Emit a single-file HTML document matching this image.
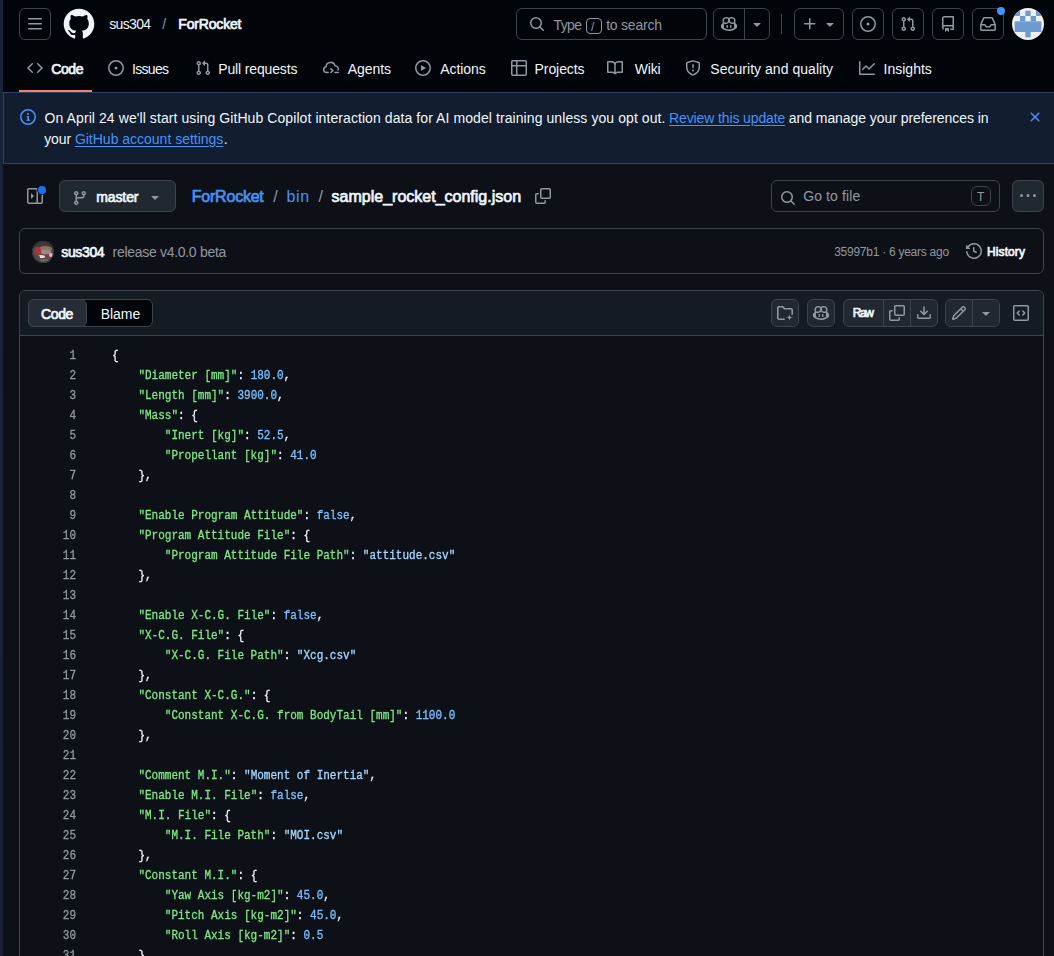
<!DOCTYPE html>
<html><head><meta charset="utf-8">
<style>
*{box-sizing:border-box;margin:0;padding:0}
html,body{width:1054px;height:956px;overflow:hidden;background:#0d1117;font-family:"Liberation Sans",sans-serif;color:#f0f6fc;font-size:14px}
.a{position:absolute}
svg{display:block;fill:currentColor}
.strip{left:0;top:0;width:3px;height:956px;background:linear-gradient(#17233a,#1a2234 50%,#1c2030)}
.hdr{left:3px;top:0;width:1051px;height:92px;background:#010409}
.btn{border:1px solid #3d444d;border-radius:6px}
.ic{color:#9198a1}
.t{white-space:nowrap;line-height:1}
.tab{font-size:14px;color:#f0f6fc}
.banner{left:3px;top:92px;width:1051px;height:72px;background:#121d2f;border:1px solid #2d4266;border-right:none}
.mono{font-family:"Liberation Mono",monospace}
.box{border:1px solid #3d444d;border-radius:6px}
.code{font-family:"Liberation Mono",monospace;font-size:12px;line-height:20px;white-space:pre;-webkit-text-stroke:0.3px currentColor;transform:scaleX(0.91667);transform-origin:0 0}.ln{transform-origin:100% 0}
.ln{color:#9198a1;text-align:right}
.k{color:#7ee787}.n{color:#79c0ff}.s{color:#a5d6ff}
</style></head><body>
<div class="a strip"></div>
<div class="a hdr"></div>


<!-- top header -->
<div class="a btn" style="left:19px;top:8px;width:32px;height:32px;color:#9198a1"><svg class="a" style="left:7px;top:7px" width="16" height="16" viewBox="0 0 16 16"><path d="M1 2.75A.75.75 0 0 1 1.75 2h12.5a.75.75 0 0 1 0 1.5H1.75A.75.75 0 0 1 1 2.75Zm0 5A.75.75 0 0 1 1.75 7h12.5a.75.75 0 0 1 0 1.5H1.75A.75.75 0 0 1 1 7.75ZM1.75 12h12.5a.75.75 0 0 1 0 1.5H1.75a.75.75 0 0 1 0-1.5Z"/></svg></div>
<svg class="a" style="left:63px;top:8px;color:#f0f6fc" width="32" height="32" viewBox="0.5 0.5 23 23"><path d="M12 1C5.923 1 1 5.923 1 12c0 4.867 3.149 8.979 7.521 10.436.55.096.756-.233.756-.522 0-.262-.013-1.128-.013-2.049-2.764.509-3.479-.674-3.699-1.292-.124-.317-.66-1.293-1.127-1.554-.385-.207-.936-.715-.014-.729.866-.014 1.485.797 1.691 1.128.99 1.663 2.571 1.196 3.204.907.096-.715.385-1.196.701-1.471-2.448-.275-5.005-1.224-5.005-5.432 0-1.196.426-2.186 1.128-2.956-.111-.275-.496-1.402.11-2.915 0 0 .921-.288 3.024 1.128a10.193 10.193 0 0 1 2.75-.371c.936 0 1.871.123 2.75.371 2.104-1.43 3.025-1.128 3.025-1.128.605 1.513.221 2.64.111 2.915.701.77 1.127 1.747 1.127 2.956 0 4.222-2.571 5.157-5.019 5.432.399.344.743 1.004.743 2.035 0 1.471-.014 2.654-.014 3.025 0 .289.206.632.756.522C19.851 20.979 23 16.854 23 12c0-6.077-4.922-11-11-11Z"/></svg>

<!-- search -->
<div class="a btn" style="left:516px;top:8px;width:191px;height:32px;"></div>
<svg class="a ic" style="left:529px;top:16px" width="16" height="16" viewBox="0 0 16 16"><path d="M10.68 11.74a6 6 0 0 1-7.922-8.982 6 6 0 0 1 8.982 7.922l3.04 3.04a.749.749 0 0 1-.326 1.275.749.749 0 0 1-.734-.215ZM11.5 7a4.499 4.499 0 1 0-8.997 0A4.499 4.499 0 0 0 11.5 7Z"/></svg>
<div class="a" style="left:586px;top:18px;width:16px;height:16px;border:1px solid #9198a1;border-radius:4px"></div>

<!-- copilot group -->
<div class="a btn" style="left:713px;top:8px;width:57px;height:32px;"></div>
<div class="a" style="left:744px;top:9px;width:1px;height:30px;background:#3d444d"></div>
<svg class="a ic" style="left:721px;top:16px" width="16" height="16" viewBox="0 0 16 16"><path d="M7.998 15.035c-4.562 0-7.873-2.914-7.998-3.749V9.338c.085-.628.677-1.686 1.588-2.065.013-.07.024-.143.036-.218.029-.183.06-.384.126-.612-.201-.508-.254-1.084-.254-1.656 0-.87.128-1.769.693-2.484.579-.733 1.494-1.124 2.724-1.261 1.206-.134 2.262.034 2.944.765.05.053.096.108.139.165.044-.057.094-.112.143-.165.682-.731 1.738-.899 2.944-.765 1.23.137 2.145.528 2.724 1.261.566.715.693 1.614.693 2.484 0 .572-.053 1.148-.254 1.656.066.228.098.429.126.612.012.076.024.148.037.218.924.385 1.522 1.471 1.591 2.095v1.872c0 .766-3.351 3.795-8.002 3.795Zm0-1.485c2.28 0 4.584-1.11 5.002-1.433V7.862l-.023-.116c-.49.21-1.075.291-1.727.291-1.146 0-2.059-.327-2.71-.991A3.222 3.222 0 0 1 8 6.303a3.24 3.240 0 0 1-.544.743c-.65.664-1.563.991-2.710.991-.652 0-1.236-.081-1.727-.291l-.023.116v4.255c.419.323 2.722 1.433 5.002 1.433ZM6.762 2.830c-.193-.206-.637-.413-1.682-.297-1.019.113-1.479.404-1.713.7-.247.312-.369.789-.369 1.554 0 .793.129 1.171.308 1.371.162.181.519.379 1.442.379.853 0 1.339-.235 1.638-.54.315-.322.527-.827.617-1.553.117-.935-.037-1.395-.241-1.614Zm4.155-.297c-1.044-.116-1.488.091-1.681.297-.204.219-.359.679-.242 1.614.091.726.303 1.231.618 1.553.299.305.784.54 1.638.54.922 0 1.28-.198 1.442-.379.179-.2.308-.578.308-1.371 0-.765-.123-1.242-.37-1.554-.233-.296-.693-.587-1.713-.7Z"/><path d="M6.25 9.037a.75.75 0 0 1 .75.75v1.501a.75.75 0 0 1-1.5 0V9.787a.75.75 0 0 1 .75-.75Zm4.25.75v1.501a.75.75 0 0 1-1.5 0V9.787a.75.75 0 0 1 1.5 0Z"/></svg>
<svg class="a ic" style="left:749px;top:16px" width="16" height="16" viewBox="0 0 16 16"><path d="m4.427 7.427 3.396 3.396a.25.25 0 0 0 .354 0l3.396-3.396A.25.25 0 0 0 11.396 7H4.604a.25.25 0 0 0-.177.427Z"/></svg>
<div class="a" style="left:781px;top:14px;width:1px;height:20px;background:#3d444d"></div>

<!-- plus -->
<div class="a btn" style="left:794px;top:8px;width:50px;height:32px;"></div>
<svg class="a ic" style="left:802px;top:16px" width="16" height="16" viewBox="0 0 16 16"><path d="M7.75 2a.75.75 0 0 1 .75.75V7h4.25a.75.75 0 0 1 0 1.5H8.5v4.25a.75.75 0 0 1-1.5 0V8.5H2.75a.75.75 0 0 1 0-1.5H7V2.75A.75.75 0 0 1 7.75 2Z"/></svg>
<svg class="a ic" style="left:822px;top:16px" width="16" height="16" viewBox="0 0 16 16"><path d="m4.427 7.427 3.396 3.396a.25.25 0 0 0 .354 0l3.396-3.396A.25.25 0 0 0 11.396 7H4.604a.25.25 0 0 0-.177.427Z"/></svg>

<div class="a btn" style="left:852px;top:8px;width:32px;height:32px;"></div>
<svg class="a ic" style="left:860px;top:16px" width="16" height="16" viewBox="0 0 16 16"><path d="M8 9.5a1.5 1.5 0 1 0 0-3 1.5 1.5 0 0 0 0 3Z"/><path d="M8 0a8 8 0 1 1 0 16A8 8 0 0 1 8 0ZM1.5 8a6.5 6.5 0 1 0 13 0 6.5 6.5 0 0 0-13 0Z"/></svg>
<div class="a btn" style="left:892px;top:8px;width:32px;height:32px;"></div>
<svg class="a ic" style="left:900px;top:16px" width="16" height="16" viewBox="0 0 16 16"><path d="M1.5 3.25a2.25 2.25 0 1 1 3 2.122v5.256a2.251 2.251 0 1 1-1.5 0V5.372A2.25 2.25 0 0 1 1.5 3.25Zm5.677-.177L9.573.677A.25.25 0 0 1 10 .854V2.5h1A2.5 2.5 0 0 1 13.5 5v5.628a2.251 2.251 0 1 1-1.5 0V5a1 1 0 0 0-1-1h-1v1.646a.25.25 0 0 1-.427.177L7.177 3.427a.25.25 0 0 1 0-.354ZM3.75 2.5a.75.75 0 1 0 0 1.5.75.75 0 0 0 0-1.5Zm0 9.5a.75.75 0 1 0 0 1.5.75.75 0 0 0 0-1.5Zm8.25.75a.75.75 0 1 0 1.5 0 .75.75 0 0 0-1.5 0Z"/></svg>
<div class="a btn" style="left:932px;top:8px;width:32px;height:32px;"></div>
<svg class="a ic" style="left:940px;top:16px" width="16" height="16" viewBox="0 0 16 16"><path d="M2 2.5A2.5 2.5 0 0 1 4.5 0h8.75a.75.75 0 0 1 .75.75v12.5a.75.75 0 0 1-.75.75h-2.5a.75.75 0 0 1 0-1.5h1.75v-2h-8a1 1 0 0 0-.714 1.7.75.75 0 1 1-1.072 1.05A2.495 2.495 0 0 1 2 11.5Zm10.5-1h-8a1 1 0 0 0-1 1v6.708A2.486 2.486 0 0 1 4.5 9h8ZM5 12.25a.25.25 0 0 1 .25-.25h3.5a.25.25 0 0 1 .25.25v3.250a.25.25 0 0 1-.4.2l-1.45-1.087a.249.249 0 0 0-.3 0L5.4 15.7a.25.25 0 0 1-.4-.2Z"/></svg>
<div class="a btn" style="left:972px;top:8px;width:32px;height:32px;"></div>
<svg class="a ic" style="left:980px;top:16px" width="16" height="16" viewBox="0 0 16 16"><path d="M2.8 2.06A1.75 1.75 0 0 1 4.41 1h7.18c.7 0 1.333.417 1.61 1.06l2.74 6.395c.04.093.06.194.06.295v4.5A1.75 1.75 0 0 1 14.25 15H1.75A1.75 1.75 0 0 1 0 13.25v-4.5c0-.101.02-.202.06-.295Zm1.61.44a.25.25 0 0 0-.23.152L1.887 8H4.75a.75.75 0 0 1 .6.3L6.625 10h2.75l1.275-1.7a.75.75 0 0 1 .6-.3h2.863L11.820 2.652a.25.25 0 0 0-.23-.152Zm10.09 7h-2.875l-1.275 1.7a.75.75 0 0 1-.6.3h-3.5a.75.75 0 0 1-.6-.3L4.375 9.5H1.5v3.75c0 .138.112.25.25.25h12.5a.25.25 0 0 0 .25-.25Z"/></svg>
<div class="a" style="left:997px;top:7px;width:8px;height:8px;border-radius:50%;background:#4493f8"></div>
<svg class="a" style="left:1012px;top:8px" width="32" height="32" viewBox="0 0 32 32"><defs><clipPath id="av"><circle cx="16" cy="16" r="16"/></clipPath></defs><g clip-path="url(#av)"><rect width="32" height="32" fill="#f0f0f0"/><g fill="#6b9bd1"><rect x="2.67" y="2.67" width="5.33" height="5.33"/><rect x="13.33" y="2.67" width="5.33" height="5.33"/><rect x="24" y="2.67" width="5.33" height="5.33"/><rect x="8" y="8" width="5.33" height="5.33"/><rect x="18.67" y="8" width="5.33" height="5.33"/><rect x="2.67" y="13.33" width="26.67" height="10.67"/><rect x="13.33" y="24" width="5.33" height="5.33"/></g></g></svg>

<!-- nav tabs -->
<svg class="a ic" style="left:27px;top:60px" width="16" height="16" viewBox="0 0 16 16"><path d="M4.72 3.22a.75.75 0 0 1 1.06 1.06L2.06 8l3.72 3.72a.75.75 0 1 1-1.06 1.06L.47 8.53a.75.75 0 0 1 0-1.06Zm6.56 0a.75.75 0 1 0-1.06 1.06L13.94 8l-3.72 3.72a.75.75 0 1 0 1.06 1.06l4.25-4.25a.75.75 0 0 0 0-1.06Z"/></svg>
<div class="a" style="left:19px;top:90px;width:73px;height:2px;background:#f78166"></div>
<svg class="a ic" style="left:108px;top:60px" width="16" height="16" viewBox="0 0 16 16"><path d="M8 9.5a1.5 1.5 0 1 0 0-3 1.5 1.5 0 0 0 0 3Z"/><path d="M8 0a8 8 0 1 1 0 16A8 8 0 0 1 8 0ZM1.5 8a6.5 6.5 0 1 0 13 0 6.5 6.5 0 0 0-13 0Z"/></svg>
<svg class="a ic" style="left:195px;top:60px" width="16" height="16" viewBox="0 0 16 16"><path d="M1.5 3.25a2.25 2.25 0 1 1 3 2.122v5.256a2.251 2.251 0 1 1-1.5 0V5.372A2.25 2.25 0 0 1 1.5 3.25Zm5.677-.177L9.573.677A.25.25 0 0 1 10 .854V2.5h1A2.5 2.5 0 0 1 13.5 5v5.628a2.251 2.251 0 1 1-1.5 0V5a1 1 0 0 0-1-1h-1v1.646a.25.25 0 0 1-.427.177L7.177 3.427a.25.25 0 0 1 0-.354ZM3.75 2.5a.75.75 0 1 0 0 1.5.75.75 0 0 0 0-1.5Zm0 9.5a.75.75 0 1 0 0 1.5.75.75 0 0 0 0-1.5Zm8.25.75a.75.75 0 1 0 1.5 0 .75.75 0 0 0-1.5 0Z"/></svg>
<svg class="a ic" style="left:323px;top:59px;fill:none" width="16" height="16" viewBox="0 0 16 16" stroke="currentColor" stroke-width="1.5" stroke-linecap="round" stroke-linejoin="round"><path d="M5.2 13.5H3.6A2.9 2.9 0 0 1 3.10 7.74A4.5 4.5 0 0 1 11.95 6.75A3.15 3.15 0 0 1 15.12 10.80"/><path d="M7.9 9.85L9.9 11.65L7.9 13.45M12 13.5H15.2"/></svg>
<svg class="a ic" style="left:415px;top:60px" width="16" height="16" viewBox="0 0 16 16"><path d="M8 0a8 8 0 1 1 0 16A8 8 0 0 1 8 0ZM1.5 8a6.5 6.5 0 1 0 13 0 6.5 6.5 0 0 0-13 0Zm4.879-2.773 4.264 2.559a.25.25 0 0 1 0 .428l-4.264 2.559A.25.25 0 0 1 6 10.559V5.442a.25.25 0 0 1 .379-.215Z"/></svg>
<svg class="a ic" style="left:511px;top:60px" width="16" height="16" viewBox="0 0 16 16"><path d="M0 1.75C0 .784.784 0 1.75 0h12.5C15.216 0 16 .784 16 1.75v12.5A1.75 1.75 0 0 1 14.25 16H1.75A1.75 1.75 0 0 1 0 14.25ZM6.5 6.5v8h7.75a.25.25 0 0 0 .25-.25V6.5Zm8-1.5V1.75a.25.25 0 0 0-.25-.25H6.5V5Zm-13 1.5v7.75c0 .138.112.25.25.25H5v-8ZM5 5V1.5H1.75a.25.25 0 0 0-.25.25V5Z"/></svg>
<svg class="a ic" style="left:607px;top:60px" width="16" height="16" viewBox="0 0 16 16"><path d="M0 1.75A.75.75 0 0 1 .75 1h4.253c1.227 0 2.317.59 3 1.501A3.743 3.743 0 0 1 11.006 1h4.245a.75.75 0 0 1 .75.75v10.5a.75.75 0 0 1-.75.75h-4.507a2.25 2.25 0 0 0-1.591.659l-.622.621a.75.75 0 0 1-1.06 0l-.622-.621A2.25 2.25 0 0 0 5.258 13H.75a.75.75 0 0 1-.75-.75Zm7.251 10.324.004-5.073-.002-2.253A2.25 2.25 0 0 0 5.003 2.5H1.5v9h3.757a3.75 3.75 0 0 1 1.994.574ZM8.755 4.75l-.004 7.322a3.752 3.752 0 0 1 1.992-.572H14.5v-9h-3.495a2.25 2.25 0 0 0-2.250 2.25Z"/></svg>
<svg class="a ic" style="left:685px;top:60px" width="16" height="16" viewBox="0 0 16 16"><path d="M7.467.133a1.748 1.748 0 0 1 1.066 0l5.25 1.68A1.75 1.75 0 0 1 15 3.48V7c0 1.566-.32 3.182-1.303 4.682-.983 1.498-2.585 2.813-5.032 3.855a1.697 1.697 0 0 1-1.33 0c-2.447-1.042-4.049-2.357-5.032-3.855C1.32 10.182 1 8.566 1 7V3.48a1.755 1.755 0 0 1 1.217-1.667Zm.61 1.429a.25.25 0 0 0-.153 0l-5.25 1.68a.25.25 0 0 0-.174.238V7c0 1.358.275 2.666 1.057 3.860.784 1.194 2.121 2.34 4.366 3.297a.196.196 0 0 0 .154 0c2.245-.956 3.582-2.104 4.366-3.298C13.225 9.666 13.5 8.36 13.5 7V3.48a.251.251 0 0 0-.174-.237l-5.25-1.68ZM8.75 4.75v3a.75.75 0 0 1-1.5 0v-3a.75.75 0 0 1 1.5 0ZM9 10.5a1 1 0 1 1-2 0 1 1 0 0 1 2 0Z"/></svg>
<svg class="a ic" style="left:859px;top:60px" width="16" height="16" viewBox="0 0 16 16"><path d="M1.5 1.75V13.5h13.75a.75.75 0 0 1 0 1.5H.75a.75.75 0 0 1-.75-.75V1.75a.75.75 0 0 1 1.5 0Zm14.28 2.53-5.25 5.25a.75.75 0 0 1-1.06 0L7 7.06 4.28 9.78a.751.751 0 0 1-1.042-.018.751.751 0 0 1-.018-1.042l3.25-3.25a.75.75 0 0 1 1.06 0L10 7.94l4.72-4.72a.751.751 0 0 1 1.042.018.751.751 0 0 1 .018 1.042Z"/></svg>

<!-- banner -->
<div class="a banner"></div>
<svg class="a" style="left:20px;top:109px;color:#4493f8" width="16" height="16" viewBox="0 0 16 16"><path d="M0 8a8 8 0 1 1 16 0A8 8 0 0 1 0 8Zm8-6.5a6.5 6.5 0 1 0 0 13 6.5 6.5 0 0 0 0-13ZM6.5 7.75A.75.75 0 0 1 7.25 7h1a.75.75 0 0 1 .75.75v2.75h.25a.75.75 0 0 1 0 1.5h-2a.75.75 0 0 1 0-1.5h.25v-2h-.25a.75.75 0 0 1-.75-.75ZM8 6a1 1 0 1 1 0-2 1 1 0 0 1 0 2Z"/></svg>
<svg class="a" style="left:1027px;top:109px;color:#4493f8" width="16" height="16" viewBox="0 0 16 16"><path d="M3.72 3.72a.75.75 0 0 1 1.06 0L8 6.94l3.22-3.22a.749.749 0 0 1 1.275.326.749.749 0 0 1-.215.734L9.06 8l3.220 3.22a.749.749 0 0 1-.326 1.275.749.749 0 0 1-.734-.215L8 9.06l-3.22 3.22a.751.751 0 0 1-1.042-.018.751.751 0 0 1-.018-1.042L6.94 8 3.72 4.78a.75.75 0 0 1 0-1.060Z"/></svg>

<!-- repo bar -->
<svg class="a ic" style="left:27px;top:188px" width="16" height="16" viewBox="0 0 16 16"><path d="M6.823 7.823a.25.25 0 0 1 0 .354l-2.396 2.396A.25.25 0 0 1 4 10.396V5.604a.25.25 0 0 1 .427-.177Z"/><path d="M1.75 0h12.5C15.216 0 16 .784 16 1.75v12.5A1.75 1.75 0 0 1 14.25 16H1.75A1.75 1.75 0 0 1 0 14.250V1.75C0 .784.784 0 1.75 0ZM1.5 1.75v12.5c0 .138.112.25.25.25H9.5v-13H1.75a.25.25 0 0 0-.25.25ZM11 14.5h3.25a.25.25 0 0 0 .25-.25V1.75a.25.25 0 0 0-.25-.25H11Z"/></svg>
<div class="a" style="left:37px;top:185px;width:10px;height:10px;border-radius:50%;background:#0d1117"></div>
<div class="a" style="left:38px;top:186px;width:8px;height:8px;border-radius:50%;background:#1f6feb"></div>

<div class="a btn" style="left:59px;top:180px;width:117px;height:32px;background:#212830"></div>
<svg class="a ic" style="left:72px;top:190px" width="16" height="16" viewBox="0 0 16 16"><path d="M9.5 3.25a2.25 2.25 0 1 1 3 2.122V6A2.5 2.5 0 0 1 10 8.5H6a1 1 0 0 0-1 1v1.128a2.251 2.251 0 1 1-1.5 0V5.372a2.25 2.25 0 1 1 1.5 0v1.836A2.493 2.493 0 0 1 6 7h4a1 1 0 0 0 1-1v-.628A2.25 2.25 0 0 1 9.5 3.25Zm-6 0a.75.75 0 1 0 1.5 0 .75.75 0 0 0-1.5 0Zm8.25-.75a.75.75 0 1 0 0 1.5.75.75 0 0 0 0-1.5ZM4.25 12a.75.75 0 1 0 0 1.5.75.75 0 0 0 0-1.5Z"/></svg>
<svg class="a ic" style="left:147px;top:189px" width="16" height="16" viewBox="0 0 16 16"><path d="m4.427 7.427 3.396 3.396a.25.25 0 0 0 .354 0l3.396-3.396A.25.25 0 0 0 11.396 7H4.604a.25.25 0 0 0-.177.427Z"/></svg>

<svg class="a ic" style="left:535px;top:188px" width="16" height="16" viewBox="0 0 16 16"><path d="M0 6.75C0 5.784.784 5 1.75 5h1.5a.75.75 0 0 1 0 1.5h-1.5a.25.25 0 0 0-.25.25v7.5c0 .138.112.25.25.25h7.5a.25.25 0 0 0 .25-.25v-1.5a.75.75 0 0 1 1.5 0v1.5A1.75 1.75 0 0 1 9.25 16h-7.5A1.75 1.75 0 0 1 0 14.25Z"/><path d="M5 1.75C5 .784 5.784 0 6.75 0h7.5C15.216 0 16 .784 16 1.75v7.5A1.75 1.75 0 0 1 14.25 11h-7.5A1.75 1.75 0 0 1 5 9.25Zm1.75-.25a.25.25 0 0 0-.25.25v7.5c0 .138.112.25.25.25h7.5a.25.25 0 0 0 .25-.25v-7.5a.25.25 0 0 0-.25-.25Z"/></svg>

<div class="a btn" style="left:771px;top:180px;width:229px;height:32px;background:#0d1117"></div>
<svg class="a ic" style="left:780px;top:190px" width="16" height="16" viewBox="0 0 16 16"><path d="M10.68 11.74a6 6 0 0 1-7.922-8.982 6 6 0 0 1 8.982 7.922l3.04 3.04a.749.749 0 0 1-.326 1.275.749.749 0 0 1-.734-.215ZM11.5 7a4.499 4.499 0 1 0-8.997 0A4.499 4.499 0 0 0 11.5 7Z"/></svg>
<div class="a" style="left:971px;top:186px;width:20px;height:20px;border:1px solid #3d444d;border-radius:6px"></div>

<div class="a btn" style="left:1012px;top:180px;width:32px;height:32px;background:#212830"></div>
<svg class="a ic" style="left:1020px;top:188px" width="16" height="16" viewBox="0 0 16 16"><path d="M8 9a1.5 1.5 0 1 0 0-3 1.5 1.5 0 0 0 0 3ZM1.5 9a1.5 1.5 0 1 0 0-3 1.5 1.5 0 0 0 0 3Zm13 0a1.5 1.5 0 1 0 0-3 1.5 1.5 0 0 0 0 3Z"/></svg>

<!-- commit box -->
<div class="a box" style="left:19px;top:228px;width:1025px;height:46px"></div>
<svg class="a" style="left:32px;top:241px" width="22" height="22" viewBox="0 0 22 22"><defs><clipPath id="ca"><circle cx="11" cy="11" r="11"/></clipPath><filter id="fb" x="-20%" y="-20%" width="140%" height="140%"><feGaussianBlur stdDeviation="0.6"/></filter></defs><g clip-path="url(#ca)"><rect width="22" height="22" fill="#5a4e4a"/><g filter="url(#fb)"><rect x="0" y="0" width="22" height="6" fill="#4a3430"/><ellipse cx="13" cy="8" rx="7" ry="3" fill="#8a726a"/><ellipse cx="6" cy="10" rx="3" ry="4" fill="#b0303c"/><ellipse cx="14" cy="11" rx="5" ry="2.5" fill="#9a8a82"/><ellipse cx="9" cy="15.5" rx="4" ry="1.6" fill="#e8e4e4"/><ellipse cx="16" cy="15" rx="3" ry="2" fill="#8a3a50"/><ellipse cx="19" cy="14" rx="2" ry="2" fill="#e0b8d0"/><ellipse cx="5" cy="17" rx="3" ry="3" fill="#504a56"/><ellipse cx="13" cy="20" rx="5" ry="2" fill="#7a6458"/></g></g><circle cx="11" cy="11" r="10.5" fill="none" stroke="#2a2f38" stroke-width="1"/></svg>
<svg class="a ic" style="left:966px;top:243px" width="16" height="16" viewBox="0 0 16 16"><path d="m.427 1.927 1.215 1.215a8.002 8.002 0 1 1-1.6 5.685.75.75 0 1 1 1.493-.154 6.5 6.5 0 1 0 1.18-4.458l1.358 1.358A.25.25 0 0 1 3.896 6H.25A.25.25 0 0 1 0 5.75V2.104a.25.25 0 0 1 .427-.177ZM7.75 4a.75.75 0 0 1 .75.75v2.992l2.028.812a.75.75 0 0 1-.557 1.392l-2.5-1A.751.751 0 0 1 7 8.25v-3.5A.75.75 0 0 1 7.75 4Z"/></svg>

<!-- file box -->
<div class="a" style="left:19px;top:290px;width:1025px;height:700px;border:1px solid #3d444d;border-radius:6px;background:#0d1117"></div>
<div class="a" style="left:20px;top:291px;width:1023px;height:44px;background:#151b23;border-radius:5px 5px 0 0"></div>
<div class="a" style="left:20px;top:335px;width:1023px;height:1px;background:#3d444d"></div>

<div class="a" style="left:28px;top:299px;width:125px;height:28px;border:1px solid #3d444d;border-radius:6px;background:#010409"></div>
<div class="a" style="left:28px;top:299px;width:59px;height:28px;border:1px solid #3d444d;border-radius:6px;background:#262c36"></div>

<div class="a btn" style="left:771px;top:299px;width:28px;height:28px;background:#212830"></div>
<svg class="a ic" style="left:777px;top:305px;fill:none" width="16" height="16" viewBox="0 0 16 16" stroke="currentColor" stroke-width="1.6" stroke-linejoin="round" stroke-linecap="butt"><path d="M7.75 14.3H2A1.25 1.25 0 0 1 0.8 13.05V2.9A1.25 1.25 0 0 1 2 1.7H5.9L7.4 3.7H14A1.25 1.25 0 0 1 15.2 4.95V9.8"/><path d="M12.5 9C12.9 11.7 13.3 12.1 16 12.5C13.3 12.9 12.9 13.3 12.5 16C12.1 13.3 11.7 12.9 9 12.5C11.7 12.1 12.1 11.7 12.5 9Z" fill="currentColor" stroke="none"/></svg>
<div class="a btn" style="left:807px;top:299px;width:28px;height:28px;background:#212830"></div>
<svg class="a ic" style="left:813px;top:305px" width="16" height="16" viewBox="0 0 16 16"><path d="M7.998 15.035c-4.562 0-7.873-2.914-7.998-3.749V9.338c.085-.628.677-1.686 1.588-2.065.013-.07.024-.143.036-.218.029-.183.06-.384.126-.612-.201-.508-.254-1.084-.254-1.656 0-.87.128-1.769.693-2.484.579-.733 1.494-1.124 2.724-1.261 1.206-.134 2.262.034 2.944.765.05.053.096.108.139.165.044-.057.094-.112.143-.165.682-.731 1.738-.899 2.944-.765 1.23.137 2.145.528 2.724 1.261.566.715.693 1.614.693 2.484 0 .572-.053 1.148-.254 1.656.066.228.098.429.126.612.012.076.024.148.037.218.924.385 1.522 1.471 1.591 2.095v1.872c0 .766-3.351 3.795-8.002 3.795Zm0-1.485c2.28 0 4.584-1.11 5.002-1.433V7.862l-.023-.116c-.49.21-1.075.291-1.727.291-1.146 0-2.059-.327-2.71-.991A3.222 3.222 0 0 1 8 6.303a3.24 3.24 0 0 1-.544.743c-.65.664-1.563.991-2.71.991-.652 0-1.236-.081-1.727-.291l-.023.116v4.255c.419.323 2.722 1.433 5.002 1.433ZM6.762 2.83c-.193-.206-.637-.413-1.682-.297-1.019.113-1.479.404-1.713.7-.247.312-.369.789-.369 1.554 0 .793.129 1.171.308 1.371.162.181.519.379 1.442.379.853 0 1.339-.235 1.638-.54.315-.322.527-.827.617-1.553.117-.935-.037-1.395-.241-1.614Zm4.155-.297c-1.044-.116-1.488.091-1.681.297-.204.219-.359.679-.242 1.614.091.726.303 1.231.618 1.553.299.305.784.54 1.638.54.922 0 1.28-.198 1.442-.379.179-.2.308-.578.308-1.371 0-.765-.123-1.242-.37-1.554-.233-.296-.693-.587-1.713-.7Z"/><path d="M6.25 9.037a.75.75 0 0 1 .75.75v1.501a.75.75 0 0 1-1.5 0V9.787a.75.75 0 0 1 .75-.75Zm4.25.75v1.501a.75.75 0 0 1-1.5 0V9.787a.75.75 0 0 1 1.5 0Z"/></svg>

<div class="a btn" style="left:843px;top:299px;width:95px;height:28px;background:#212830"></div>
<div class="a" style="left:883px;top:300px;width:1px;height:26px;background:#3d444d"></div>
<div class="a" style="left:910px;top:300px;width:1px;height:26px;background:#3d444d"></div>
<svg class="a ic" style="left:889px;top:305px" width="16" height="16" viewBox="0 0 16 16"><path d="M0 6.75C0 5.784.784 5 1.75 5h1.5a.75.75 0 0 1 0 1.5h-1.5a.25.25 0 0 0-.25.25v7.5c0 .138.112.25.25.25h7.5a.25.25 0 0 0 .25-.25v-1.5a.75.75 0 0 1 1.5 0v1.5A1.75 1.75 0 0 1 9.25 16h-7.5A1.75 1.75 0 0 1 0 14.25Z"/><path d="M5 1.75C5 .784 5.784 0 6.75 0h7.5C15.216 0 16 .784 16 1.75v7.5A1.75 1.75 0 0 1 14.25 11h-7.5A1.75 1.75 0 0 1 5 9.25Zm1.75-.25a.25.25 0 0 0-.25.25v7.5c0 .138.112.25.25.25h7.5a.25.25 0 0 0 .25-.25v-7.5a.25.25 0 0 0-.25-.25Z"/></svg>
<svg class="a ic" style="left:916px;top:305px" width="16" height="16" viewBox="0 0 16 16"><path d="M2.75 14A1.75 1.75 0 0 1 1 12.25v-2.5a.75.75 0 0 1 1.5 0v2.5c0 .138.112.25.25.25h10.5a.25.25 0 0 0 .25-.25v-2.5a.75.75 0 0 1 1.5 0v2.5A1.75 1.75 0 0 1 13.25 14Z"/><path d="M7.25 7.689V2a.75.75 0 0 1 1.5 0v5.689l1.97-1.969a.749.749 0 1 1 1.06 1.06l-3.25 3.25a.749.749 0 0 1-1.06 0L4.22 6.78a.749.749 0 1 1 1.06-1.06l1.97 1.969Z"/></svg>

<div class="a btn" style="left:945px;top:299px;width:55px;height:28px;background:#212830"></div>
<div class="a" style="left:972px;top:300px;width:1px;height:26px;background:#3d444d"></div>
<svg class="a ic" style="left:951px;top:305px" width="16" height="16" viewBox="0 0 16 16"><path d="M11.013 1.427a1.75 1.75 0 0 1 2.474 0l1.086 1.086a1.75 1.75 0 0 1 0 2.474l-8.61 8.61c-.21.21-.47.364-.756.445l-3.251.93a.75.75 0 0 1-.927-.928l.929-3.25c.081-.286.235-.547.445-.758l8.61-8.61Zm.176 4.823L9.75 4.81l-6.286 6.287a.253.253 0 0 0-.064.108l-.558 1.953 1.953-.558a.253.253 0 0 0 .108-.064Zm1.238-3.763a.25.25 0 0 0-.354 0L10.811 3.75l1.439 1.44 1.263-1.263a.25.25 0 0 0 0-.354Z"/></svg>
<svg class="a ic" style="left:978px;top:305px" width="16" height="16" viewBox="0 0 16 16"><path d="m4.427 7.427 3.396 3.396a.25.25 0 0 0 .354 0l3.396-3.396A.25.25 0 0 0 11.396 7H4.604a.25.25 0 0 0-.177.427Z"/></svg>

<svg class="a ic" style="left:1013px;top:305px" width="16" height="16" viewBox="0 0 16 16"><path d="M0 1.75C0 .784.784 0 1.75 0h12.5C15.216 0 16 .784 16 1.75v12.5A1.75 1.75 0 0 1 14.25 16H1.75A1.75 1.75 0 0 1 0 14.25Zm1.75-.25a.25.25 0 0 0-.25.25v12.5c0 .138.112.25.25.25h12.5a.25.25 0 0 0 .25-.25V1.75a.25.25 0 0 0-.25-.25Zm7.47 3.97a.75.75 0 0 1 1.06 0l2 2a.75.75 0 0 1 0 1.06l-2 2a.749.749 0 0 1-1.275-.326.749.749 0 0 1 .215-.734L10.69 8 9.22 6.53a.75.75 0 0 1 0-1.06ZM6.78 6.53 5.31 8l1.47 1.47a.749.749 0 0 1-.326 1.275.749.749 0 0 1-.734-.215l-2-2a.75.75 0 0 1 0-1.06l2-2a.751.751 0 0 1 1.042.018.751.751 0 0 1 .018 1.042Z"/></svg>

<div class="a t" style="left:591px;top:21px;font-size:12px;color:#9198a1">/</div>
<div class="a t" style="left:977px;top:191px;font-size:12px;color:#9198a1">T</div>
<div id="h_user" class="a t" style="left:109.25px;top:17px;font-size:14px;color:#f0f6fc;letter-spacing:-0.670px">sus304</div>
<div id="h_slash" class="a t" style="left:162.20px;top:17px;font-size:14px;color:#9198a1;letter-spacing:0.000px">/</div>
<div id="h_repo" class="a t" style="left:178.30px;top:17px;font-size:14px;color:#f0f6fc;letter-spacing:-0.175px;-webkit-text-stroke:0.7px currentColor">ForRocket</div>
<div id="s_type" class="a t" style="left:553.60px;top:18px;font-size:14px;color:#9198a1;letter-spacing:-0.633px">Type</div>
<div id="s_tos" class="a t" style="left:606.20px;top:18px;font-size:14px;color:#9198a1;letter-spacing:-0.225px">to search</div>
<div id="t_code" class="a t" style="left:51.30px;top:62px;font-size:14px;color:#f0f6fc;letter-spacing:-0.433px;-webkit-text-stroke:0.7px currentColor">Code</div>
<div id="t_issues" class="a t" style="left:132.00px;top:62px;font-size:14px;color:#f0f6fc;letter-spacing:-0.680px">Issues</div>
<div id="t_pr" class="a t" style="left:218.30px;top:62px;font-size:14px;color:#f0f6fc;letter-spacing:-0.150px">Pull requests</div>
<div id="t_agents" class="a t" style="left:347.70px;top:62px;font-size:14px;color:#f0f6fc;letter-spacing:-0.060px">Agents</div>
<div id="t_actions" class="a t" style="left:440.20px;top:62px;font-size:14px;color:#f0f6fc;letter-spacing:-0.067px">Actions</div>
<div id="t_projects" class="a t" style="left:534.60px;top:62px;font-size:14px;color:#f0f6fc;letter-spacing:-0.086px">Projects</div>
<div id="t_wiki" class="a t" style="left:634.80px;top:62px;font-size:14px;color:#f0f6fc;letter-spacing:-0.167px">Wiki</div>
<div id="t_sec" class="a t" style="left:710.30px;top:62px;font-size:14px;color:#f0f6fc;letter-spacing:0.032px">Security and quality</div>
<div id="t_ins" class="a t" style="left:883.50px;top:62px;font-size:14px;color:#f0f6fc;letter-spacing:0.014px">Insights</div>
<div id="b1" class="a t" style="left:44.60px;top:111px;font-size:14px;color:#f0f6fc;letter-spacing:0.079px">On April 24 we'll start using GitHub Copilot interaction data for AI model training unless you opt out.</div>
<div id="b1l" class="a t" style="left:669.00px;top:111px;font-size:14px;color:#4493f8;letter-spacing:-0.118px;text-decoration:underline;text-underline-offset:2px">Review this update</div>
<div id="b1e" class="a t" style="left:788.80px;top:111px;font-size:14px;color:#f0f6fc;letter-spacing:-0.062px">and manage your preferences in</div>
<div id="b2" class="a t" style="left:44.20px;top:132px;font-size:14px;color:#f0f6fc;letter-spacing:-0.100px">your</div>
<div id="b2l" class="a t" style="left:74.90px;top:132px;font-size:14px;color:#4493f8;letter-spacing:-0.009px;text-decoration:underline;text-underline-offset:2px">GitHub account settings</div>
<div id="b2d" class="a t" style="left:223.80px;top:132px;font-size:14px;color:#f0f6fc;letter-spacing:0.000px">.</div>
<div id="master" class="a t" style="left:96.20px;top:190px;font-size:14px;color:#f0f6fc;letter-spacing:-0.100px;-webkit-text-stroke:0.7px currentColor">master</div>
<div id="bc_repo" class="a t" style="left:191.80px;top:189px;font-size:16px;color:#4493f8;letter-spacing:-0.225px;-webkit-text-stroke:0.7px currentColor">ForRocket</div>
<div id="bc_s1" class="a t" style="left:273.30px;top:189px;font-size:16px;color:#9198a1;letter-spacing:0.000px">/</div>
<div id="bc_bin" class="a t" style="left:286.50px;top:189px;font-size:16px;color:#4493f8;letter-spacing:0.650px">bin</div>
<div id="bc_s2" class="a t" style="left:318.40px;top:189px;font-size:16px;color:#9198a1;letter-spacing:0.000px">/</div>
<div id="bc_file" class="a t" style="left:331.60px;top:189px;font-size:16px;color:#f0f6fc;letter-spacing:0.000px;-webkit-text-stroke:0.7px currentColor">sample_rocket_config.json</div>
<div id="gotofile" class="a t" style="left:803.20px;top:189px;font-size:14px;color:#9198a1;letter-spacing:0.111px">Go to file</div>
<div id="c_user" class="a t" style="left:61.30px;top:245px;font-size:14px;color:#f0f6fc;letter-spacing:-0.360px;-webkit-text-stroke:0.7px currentColor">sus304</div>
<div id="c_msg" class="a t" style="left:112.60px;top:245px;font-size:14px;color:#9198a1;letter-spacing:-0.300px">release v4.0.0 beta</div>
<div id="c_sha" class="a t" style="left:834.20px;top:246px;font-size:12px;color:#9198a1;letter-spacing:-0.260px">35997b1 · 6 years ago</div>
<div id="c_hist" class="a t" style="left:987.00px;top:246px;font-size:12px;color:#f0f6fc;letter-spacing:0.100px;-webkit-text-stroke:0.7px currentColor">History</div>
<div id="seg_code" class="a t" style="left:41.10px;top:307px;font-size:14px;color:#f0f6fc;letter-spacing:-0.400px;-webkit-text-stroke:0.7px currentColor">Code</div>
<div id="seg_blame" class="a t" style="left:100.80px;top:307px;font-size:14px;color:#f0f6fc;letter-spacing:-0.075px">Blame</div>
<div id="raw" class="a t" style="left:852.80px;top:307px;font-size:12px;color:#f0f6fc;letter-spacing:-1.400px;-webkit-text-stroke:0.7px currentColor">Raw</div>
<!-- code -->
<div class="a code ln" style="left:40px;width:36px;top:346px">1
2
3
4
5
6
7
8
9
10
11
12
13
14
15
16
17
18
19
20
21
22
23
24
25
26
27
28
29
30
31
32</div>
<div class="a code" style="left:112px;top:346px;color:#f0f6fc">{
    <span class="k">&quot;Diameter [mm]&quot;</span>: <span class="n">180.0</span>,
    <span class="k">&quot;Length [mm]&quot;</span>: <span class="n">3900.0</span>,
    <span class="k">&quot;Mass&quot;</span>: {
        <span class="k">&quot;Inert [kg]&quot;</span>: <span class="n">52.5</span>,
        <span class="k">&quot;Propellant [kg]&quot;</span>: <span class="n">41.0</span>
    },

    <span class="k">&quot;Enable Program Attitude&quot;</span>: <span class="n">false</span>,
    <span class="k">&quot;Program Attitude File&quot;</span>: {
        <span class="k">&quot;Program Attitude File Path&quot;</span>: <span class="s">&quot;attitude.csv&quot;</span>
    },

    <span class="k">&quot;Enable X-C.G. File&quot;</span>: <span class="n">false</span>,
    <span class="k">&quot;X-C.G. File&quot;</span>: {
        <span class="k">&quot;X-C.G. File Path&quot;</span>: <span class="s">&quot;Xcg.csv&quot;</span>
    },
    <span class="k">&quot;Constant X-C.G.&quot;</span>: {
        <span class="k">&quot;Constant X-C.G. from BodyTail [mm]&quot;</span>: <span class="n">1100.0</span>
    },

    <span class="k">&quot;Comment M.I.&quot;</span>: <span class="s">&quot;Moment of Inertia&quot;</span>,
    <span class="k">&quot;Enable M.I. File&quot;</span>: <span class="n">false</span>,
    <span class="k">&quot;M.I. File&quot;</span>: {
        <span class="k">&quot;M.I. File Path&quot;</span>: <span class="s">&quot;MOI.csv&quot;</span>
    },
    <span class="k">&quot;Constant M.I.&quot;</span>: {
        <span class="k">&quot;Yaw Axis [kg-m2]&quot;</span>: <span class="n">45.0</span>,
        <span class="k">&quot;Pitch Axis [kg-m2]&quot;</span>: <span class="n">45.0</span>,
        <span class="k">&quot;Roll Axis [kg-m2]&quot;</span>: <span class="n">0.5</span>
    },
    <span class="k">&quot;Comment&quot;</span>: <span class="s">&quot;&quot;</span>,</div>

</body></html>
